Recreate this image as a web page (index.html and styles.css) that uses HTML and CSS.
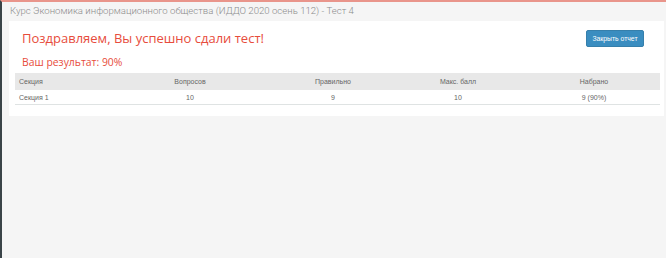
FILE: index.html
```html
<!DOCTYPE html>
<html lang="ru">
<head>
<meta charset="utf-8">
<link rel="stylesheet" href="styles.css">
</head>
<body>
<div class="page">
  <div class="title">Курс Экономика информационного общества (ИДДО 2020 осень 112) - Тест 4</div>
  <div class="card">
    <div class="head">
      <div class="msg">
        <h1>Поздравляем, Вы успешно сдали тест!</h1>
        <h2>Ваш результат: 90%</h2>
      </div>
      <button class="btn">Закрыть отчет</button>
    </div>
    <table class="res">
      <colgroup>
        <col class="c1"><col class="c2"><col class="c3"><col class="c4"><col class="c5">
      </colgroup>
      <thead>
        <tr><th class="l">Секция</th><th>Вопросов</th><th>Правильно</th><th>Макс. балл</th><th>Набрано</th></tr>
      </thead>
      <tbody>
        <tr><td class="l">Секция 1</td><td>10</td><td>9</td><td>10</td><td>9 (90%)</td></tr>
      </tbody>
    </table>
  </div>
</div>
</body>
</html>
```
FILE: styles.css
```css
html, body { margin: 0; padding: 0; }
body {
  background: #f5f5f5;
  font-family: "Open Sans", "Liberation Sans", sans-serif;
  width: 666px;
  height: 258px;
  overflow: hidden;
}
.page {
  height: 256px;
  border-top: 2px solid #e9958b;
  border-left: 2px solid #3a4448;
  padding: 0 2px 0 7px;
}
.title {
  color: #8c8c8c;
  font-family: Roboto, "Liberation Sans", sans-serif;
  font-weight: 300;
  font-size: 9.6px;
  line-height: 17px;
  padding-left: 1px;
}
.card {
  background: #fff;
  margin-top: 2px;
  padding: 8px 4px 11px 6px;
}
.head {
  display: flex;
  justify-content: space-between;
  align-items: flex-start;
  padding: 0 0 0 7px;
}
.msg h1 {
  margin: 0;
  color: #e74c3c;
  font-weight: 400;
  font-size: 13px;
  line-height: 18px;
}
.msg h2 {
  margin: 8px 0 0;
  color: #e74c3c;
  font-weight: 400;
  font-size: 10.4px;
  line-height: 14px;
}
.btn {
  margin: 1px 16px 0 0;
  background: #3a8dc0;
  border: 1px solid #367fab;
  border-radius: 2px;
  color: #fff;
  font-family: "Liberation Sans", Arial, sans-serif;
  font-size: 6.8px;
  height: 17px;
  width: 58px;
  padding: 0;
}
.res {
  width: 645px;
  border-collapse: collapse;
  table-layout: fixed;
  margin-top: 4px;
  font-family: "Liberation Sans", Arial, sans-serif;
  font-size: 7px;
  color: #666;
}
.c1 { width: 87px; }
.c2 { width: 176px; }
.c3 { width: 110px; }
.c4 { width: 140px; }
.c5 { width: 132px; }
.res th {
  background: #e8e8e8;
  font-weight: 400;
  height: 17px;
  padding: 0;
  text-align: center;
}
.res td {
  height: 14px;
  padding: 0;
  text-align: center;
  border-bottom: 1px solid #dfe3e3;
}
.res .l { text-align: left; padding-left: 4px; }
```
